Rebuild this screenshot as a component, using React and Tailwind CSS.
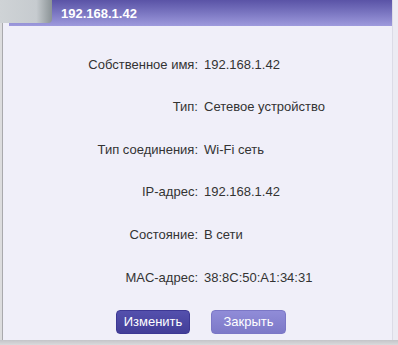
const ROWS = [
  ['Собственное имя:', '192.168.1.42'],
  ['Тип:', 'Сетевое устройство'],
  ['Тип соединения:', 'Wi-Fi сеть'],
  ['IP-адрес:', '192.168.1.42'],
  ['Состояние:', 'В сети'],
  ['MAC-адрес:', '38:8C:50:A1:34:31'],
];

export default function App() {
  return (
    <div className="relative w-[398px] h-[345px] flex flex-col bg-[#d4d4d6] font-['Liberation_Sans',Arial,sans-serif]">
      <div className="flex flex-1">
        {/* background window edge */}
        <div className="w-[3px] flex">
          <div className="w-[2px] bg-[#dcdcde]" />
          <div className="w-[1px] bg-[#a9a9ad]" />
        </div>

        {/* dialog */}
        <div className="flex-1 flex flex-col bg-[#f0eff9]">
          <div className="ml-[6px] h-[26px] bg-gradient-to-b from-[#5a53a6] to-[#9e9add] flex items-center pl-[52px]">
            <span className="text-white font-bold text-[13px] leading-none">192.168.1.42</span>
          </div>

          <div className="pt-[17px] grid grid-cols-[195px_1fr] gap-x-[6px] text-[13px] text-[#333]">
            {ROWS.map(([label, value]) => (
              <div key={label} className="contents">
                <div className="h-[42.6px] flex items-center justify-end">{label}</div>
                <div className="h-[42.6px] flex items-center">{value}</div>
              </div>
            ))}
          </div>

          <div className="mt-[11px] flex justify-center gap-[21px] pl-[7px]">
            <button className="w-[74px] h-[24px] rounded-[4px] border border-[#3d3894] bg-gradient-to-b from-[#5450ad] to-[#433e98] text-white text-[13px]">
              Изменить
            </button>
            <button className="w-[75px] h-[24px] rounded-[4px] border border-[#7b77c6] bg-gradient-to-b from-[#908cd8] to-[#7d79c8] text-white text-[13px]">
              Закрыть
            </button>
          </div>
        </div>

        {/* right edge */}
        <div className="w-[6px] flex">
          <div className="w-[1px] bg-[#dcdbe6]" />
          <div className="flex-1 bg-[#ecebf3]" />
        </div>
      </div>

      {/* bottom shadow */}
      <div className="h-[5px] bg-gradient-to-b from-[#c4c4c8] to-[#dadadc]" />

      {/* overlapping window fragment at top-left */}
      <div className="absolute left-0 top-0 w-[52px] h-[23px] rounded-br-[4px] bg-gradient-to-r from-[#cfd3d6] via-[#c6cbcf] via-70% to-[#8b9396]" />
    </div>
  );
}
